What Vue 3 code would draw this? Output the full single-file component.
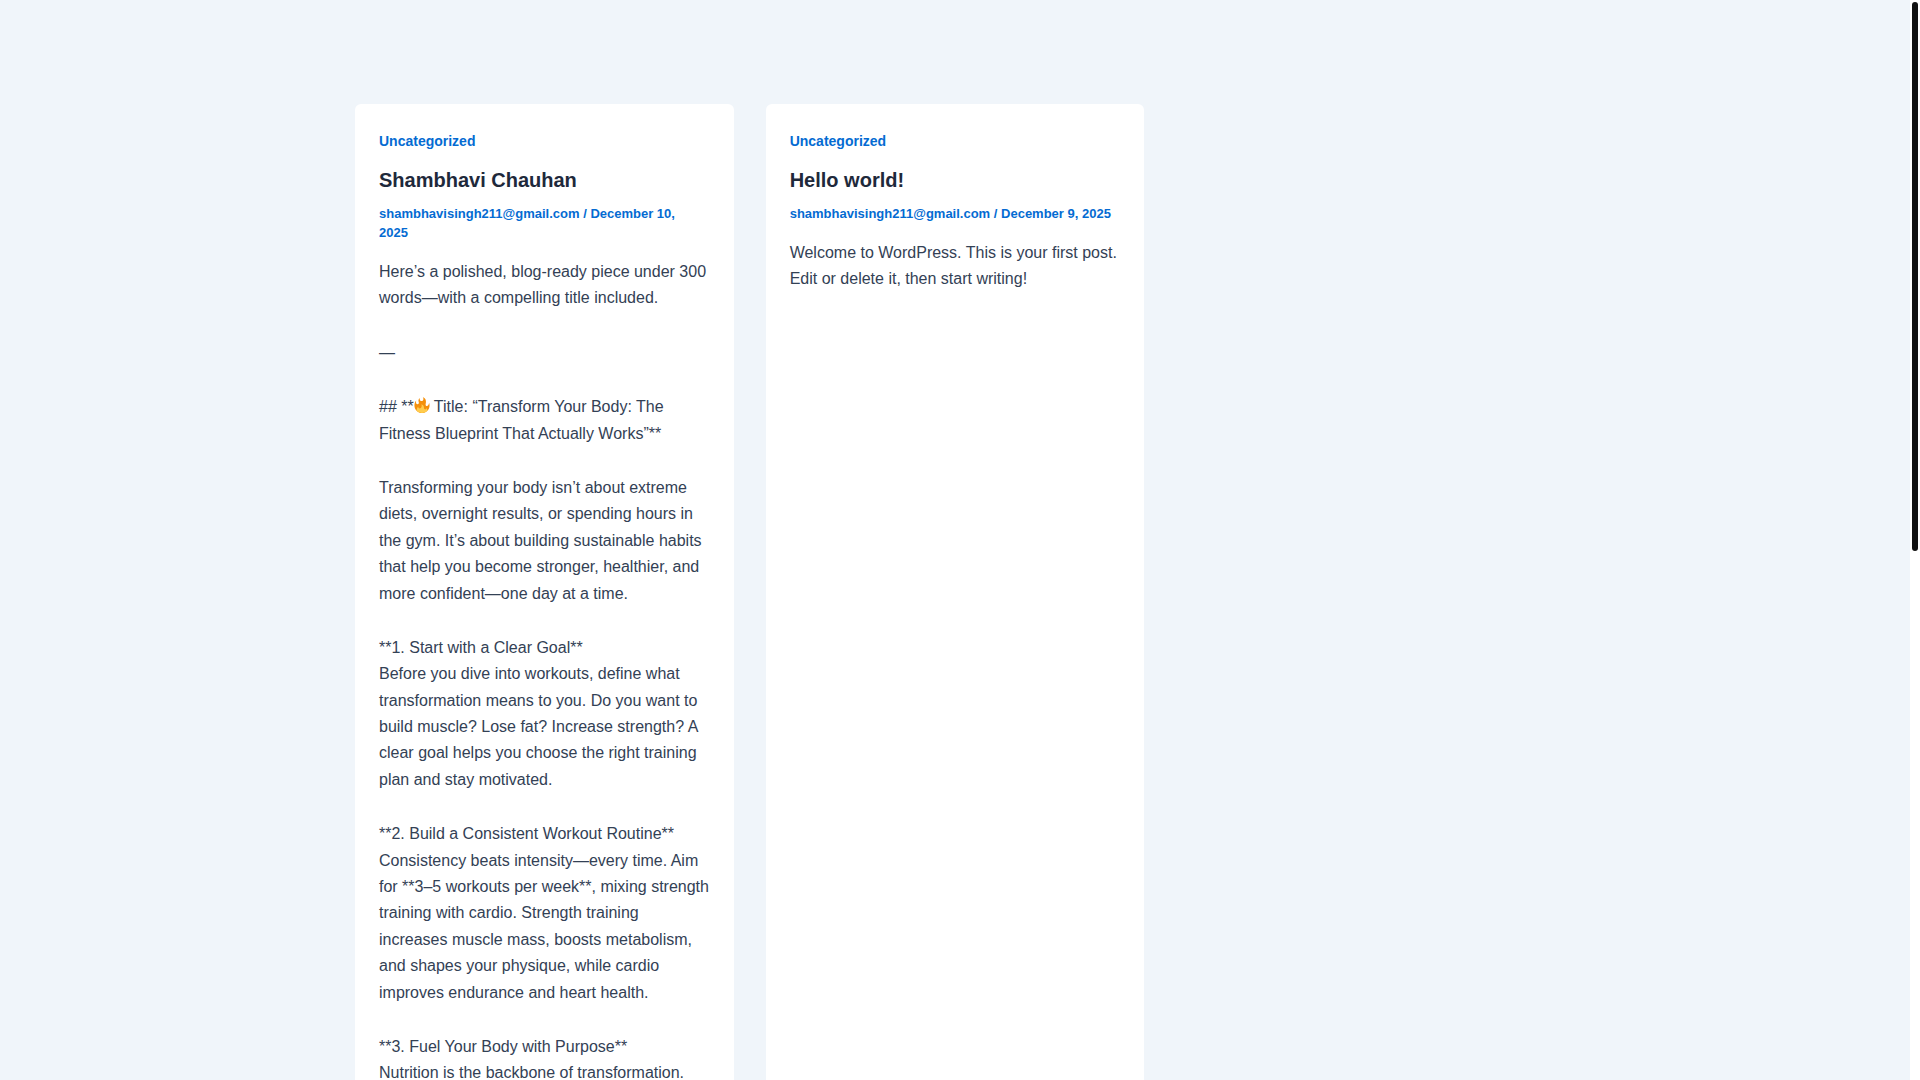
<script setup>
const posts = [
  {
    id: 1,
    category: 'Uncategorized',
    title: 'Shambhavi Chauhan',
    author: 'shambhavisingh211@gmail.com',
    date: 'December 10, 2025',
    paragraphs: [
      ['Here’s a polished, blog-ready piece under 300 words—with a compelling title included.'],
      ['—'],
      [{ before: '## **', after: ' Title: “Transform Your Body: The Fitness Blueprint That Actually Works”**' }],
      ['Transforming your body isn’t about extreme diets, overnight results, or spending hours in the gym. It’s about building sustainable habits that help you become stronger, healthier, and more confident—one day at a time.'],
      [
        '**1. Start with a Clear Goal**',
        'Before you dive into workouts, define what transformation means to you. Do you want to build muscle? Lose fat? Increase strength? A clear goal helps you choose the right training plan and stay motivated.',
      ],
      [
        '**2. Build a Consistent Workout Routine**',
        'Consistency beats intensity—every time. Aim for **3–5 workouts per week**, mixing strength training with cardio. Strength training increases muscle mass, boosts metabolism, and shapes your physique, while cardio improves endurance and heart health.',
      ],
      ['**3. Fuel Your Body with Purpose**', 'Nutrition is the backbone of transformation.'],
    ],
  },
  {
    id: 2,
    category: 'Uncategorized',
    title: 'Hello world!',
    author: 'shambhavisingh211@gmail.com',
    date: 'December 9, 2025',
    paragraphs: [['Welcome to WordPress. This is your first post. Edit or delete it, then start writing!']],
  },
]
</script>

<template>
  <div class="viewport">
    <main class="content">
      <div class="posts">
        <article v-for="post in posts" :key="post.id" class="post">
          <a class="category" href="#">{{ post.category }}</a>
          <h2 class="title"><a href="#">{{ post.title }}</a></h2>
          <div class="meta">
            <a href="#">{{ post.author }}</a> / <time>{{ post.date }}</time>
          </div>
          <p v-for="(lines, p) in post.paragraphs" :key="p">
            <template v-for="(line, l) in lines" :key="l">
              <br v-if="l > 0" />
              <template v-if="line.before">{{ line.before }}<svg class="emoji" viewBox="0 0 36 36" role="img" aria-label="fire"><path fill="#F4900C" d="M35 19c0-2.062-.367-4.039-1.04-5.868-.46 5.389-3.333 8.157-6.335 6.868-2.812-1.208-.917-5.917-.777-8.164.236-3.809-.012-8.169-6.931-11.794 2.875 5.5.333 8.917-2.333 9.125-2.958.231-5.667-2.542-4.667-7.042-3.238 2.386-3.332 6.402-2.333 9 1.042 2.708-.042 4.958-2.583 5.208-2.84.28-4.418-3.041-2.963-8.333C2.52 10.965 1 14.805 1 19c0 9.389 7.611 17 17 17s17-7.611 17-17z" /><path fill="#FFCC4D" d="M28.394 23.999c.148 3.084-2.561 4.293-4.019 3.709-2.106-.843-1.541-2.291-2.083-5.291s-2.625-5.083-5.708-6c2.25 6.333-1.247 8.667-3.08 9.084-1.872.426-3.753-.001-3.968-4.007C7.352 23.668 6 26.676 6 30c0 .368.023.73.055 1.09C9.125 34.124 13.342 36 18 36s8.875-1.876 11.945-4.91c.032-.36.055-.722.055-1.09 0-2.187-.584-4.236-1.606-6.001z" /></svg>{{ line.after }}</template>
              <template v-else>{{ line }}</template>
            </template>
          </p>
        </article>
      </div>
    </main>
    <div class="scrollbar" aria-hidden="true"><div class="thumb"></div></div>
  </div>
</template>

<style>
body {
  background: #f0f5fa;
}
</style>

<style scoped>
.viewport {
  display: flex;
  height: 100vh;
  overflow: hidden;
  font-family: "Liberation Sans", Arial, sans-serif;
  font-size: 16px;
  line-height: 1.65;
  color: #334155;
}

.content {
  display: flex;
  flex: 1;
  justify-content: center;
  padding-top: 104px;
}

.posts {
  display: grid;
  grid-template-columns: repeat(3, 1fr);
  gap: 32px;
  width: 100%;
  max-width: 1200px;
}

.post {
  box-sizing: border-box;
  padding: 24px;
  background: #fff;
  border-radius: 6px;
}

a {
  color: inherit;
  text-decoration: none;
}

.category {
  display: block;
  font-size: 14px;
  font-weight: 700;
  line-height: 26px;
  color: #046bd2;
}

.title {
  margin: 12px 0 10px;
  font-size: 20px;
  font-weight: 700;
  line-height: 28px;
  color: #1e293b;
}

.meta {
  margin-bottom: 17px;
  padding-right: 4px;
  font-size: 13px;
  font-weight: 700;
  line-height: 19px;
  color: #046bd2;
}

p {
  margin: 0 0 28px;
}

.emoji {
  width: 16px;
  height: 16px;
  vertical-align: -1px;
}

.scrollbar {
  box-sizing: border-box;
  width: 10px;
  padding: 2px;
  background: #fff;
}

.thumb {
  height: 51%;
  background: #111;
  border-radius: 3px;
}
</style>
